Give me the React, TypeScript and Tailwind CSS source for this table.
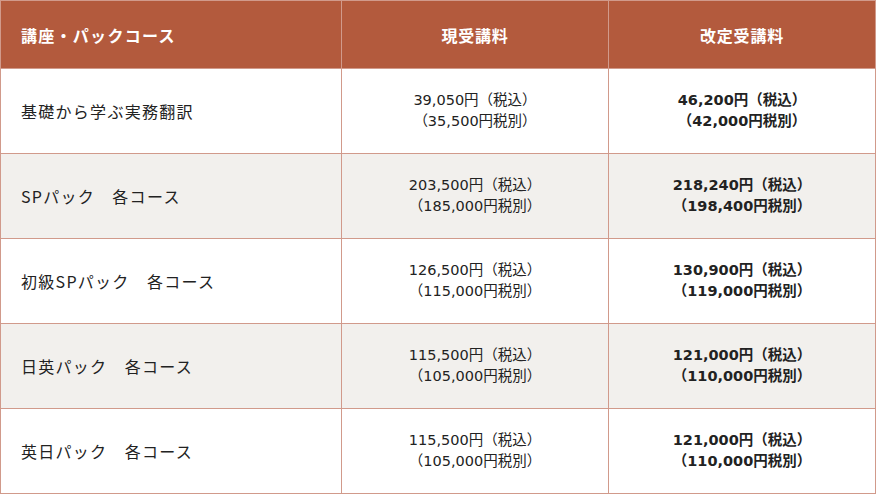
import React from 'react';

const rows = [
  { name: '基礎から学ぶ実務翻訳', cur: ['39,050円（税込）', '（35,500円税別）'], next: ['46,200円（税込）', '（42,000円税別）'] },
  { name: 'SPパック　各コース', cur: ['203,500円（税込）', '（185,000円税別）'], next: ['218,240円（税込）', '（198,400円税別）'] },
  { name: '初級SPパック　各コース', cur: ['126,500円（税込）', '（115,000円税別）'], next: ['130,900円（税込）', '（119,000円税別）'] },
  { name: '日英パック　各コース', cur: ['115,500円（税込）', '（105,000円税別）'], next: ['121,000円（税込）', '（110,000円税別）'] },
  { name: '英日パック　各コース', cur: ['115,500円（税込）', '（105,000円税別）'], next: ['121,000円（税込）', '（110,000円税別）'] },
];

const font = { fontFamily: '"Noto Sans CJK JP", "Noto Sans", sans-serif' };
const priceFont = { fontFamily: '"DejaVu Sans", "Noto Sans CJK JP", sans-serif' };

const App: React.FC = () => {
  return (
    <div className="w-[877px] h-[495px] bg-white" style={font}>
      <div className="w-[876px] border border-[#d19a8b] text-[#222]">
        <div className="grid grid-cols-[341px_267px_1fr] h-[67px] bg-[#b35a3d] text-white font-bold">
          <div className="flex items-center pl-[20px] text-[16px] tracking-[0.08em] border-r border-[#d19a8b]">講座・パックコース</div>
          <div className="flex items-center justify-center text-[16px] tracking-[0.05em] border-r border-[#d19a8b]">現受講料</div>
          <div className="flex items-center justify-center text-[16px] tracking-[0.05em]">改定受講料</div>
        </div>
        {rows.map((r, i) => (
          <div
            key={i}
            className={`grid grid-cols-[341px_267px_1fr] h-[85px] border-t border-[#d19a8b] ${i % 2 === 1 ? 'bg-[#f2f0ed]' : 'bg-white'}`}
          >
            <div className="flex items-center pl-[20px] text-[16px] tracking-[0.08em] border-r border-[#d19a8b]">{r.name}</div>
            <div className="flex flex-col items-center justify-center text-[14.5px] leading-[21px] border-r border-[#d19a8b]" style={priceFont}>
              <span>{r.cur[0]}</span>
              <span>{r.cur[1]}</span>
            </div>
            <div className="flex flex-col items-center justify-center text-[14.5px] leading-[21px] font-bold" style={priceFont}>
              <span>{r.next[0]}</span>
              <span>{r.next[1]}</span>
            </div>
          </div>
        ))}
      </div>
    </div>
  );
};

export default App;
